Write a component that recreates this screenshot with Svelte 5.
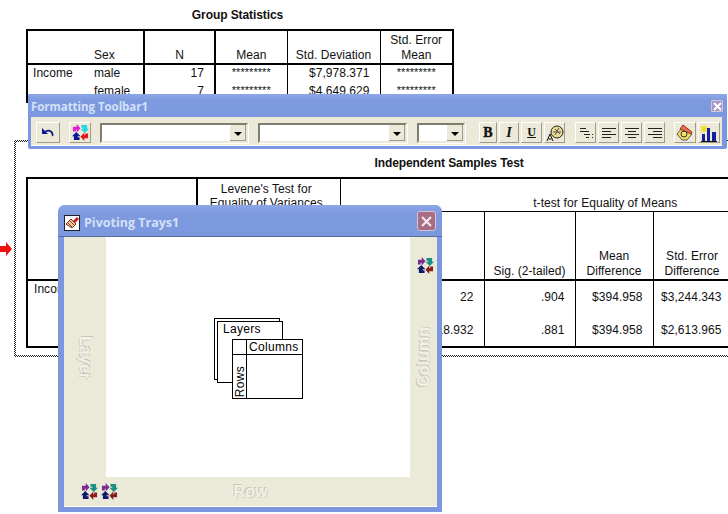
<script>
  const groupRows = [
    { sex: 'male', n: '17', mean: '*********', sd: '$7,978.371', se: '*********' },
    { sex: 'female', n: '7', mean: '*********', sd: '$4,649.629', se: '*********' }
  ]
  const testRows = [
    { label: 'Income', df: '22', sig: '.904', diff: '$394.958', err: '$3,244.343' },
    { label: '', df: '18.932', sig: '.881', diff: '$394.958', err: '$2,613.965' }
  ]
  const bright = ['#e020d0', '#20d8e0', '#0a1a90', '#e01818']
  const dark = ['#7c2c90', '#1c9080', '#10186a', '#8c1c1c']
</script>

{#snippet pivotIcon(c)}
  <svg class="ico" width="17" height="17" viewBox="0 0 18 18">
    <path d="M1 8V3h4V0l4 4.500L5 9V6H4v2z" fill={c[0]} />
    <path d="M10 1h6v4h2l-4.500 4.500L9 5h3V4h-2z" fill={c[1]} />
    <path d="M8 17H2v-4H0l4.500-4.500L9 13H6v1h2z" fill={c[2]} />
    <path d="M17 10v5h-4v3l-4-4.500L13 9v3h1v-2z" fill={c[3]} />
  </svg>
{/snippet}

<div class="page">
  <section class="output first">
    <h2>Group Statistics</h2>
    <table class="group">
      <colgroup><col style="width:67px" /><col style="width:50px" /><col style="width:71px" /><col style="width:72px" /><col style="width:93px" /><col style="width:73px" /></colgroup>
      <thead>
        <tr>
          <th class="plain"></th>
          <th class="left strong">Sex</th>
          <th class="strong">N</th>
          <th>Mean</th>
          <th>Std. Deviation</th>
          <th>Std. Error<br />Mean</th>
        </tr>
      </thead>
      <tbody>
        {#each groupRows as r, i}
          <tr>
            <td class="left plain">{i === 0 ? 'Income' : ''}</td>
            <td class="left strong">{r.sex}</td>
            <td class="strong">{r.n}</td>
            <td class="mid">{r.mean}</td>
            <td>{r.sd}</td>
            <td class="mid">{r.se}</td>
          </tr>
        {/each}
      </tbody>
    </table>
  </section>

  <section class="output second">
    <div class="hatch">
      <div class="sheet">
        <h2>Independent Samples Test</h2>
        <table class="indep">
          <colgroup><col style="width:170px" /><col style="width:72px" /><col style="width:71px" /><col style="width:58px" /><col style="width:86px" /><col style="width:91px" /><col style="width:78px" /><col style="width:78px" /><col style="width:140px" /></colgroup>
          <thead>
            <tr class="top">
              <th class="strong"></th>
              <th colspan="2" class="mid-head">Levene's Test for<br />Equality of Variances</th>
              <th colspan="6" class="span">t-test for Equality of Means</th>
            </tr>
            <tr class="sub">
              <th class="strong"></th>
              <th class="plain"></th>
              <th></th>
              <th class="plain"></th>
              <th class="df">df</th>
              <th>Sig. (2-tailed)</th>
              <th>Mean<br />Difference</th>
              <th>Std. Error<br />Difference</th>
              <th></th>
            </tr>
          </thead>
          <tbody>
            {#each testRows as r}
              <tr>
                <td class="left strong">{r.label}</td>
                <td class="plain"></td>
                <td></td>
                <td class="plain"></td>
                <td>{r.df}</td>
                <td>{r.sig}</td>
                <td>{r.diff}</td>
                <td class="last">{r.err}</td>
                <td></td>
              </tr>
            {/each}
          </tbody>
        </table>
      </div>
    </div>
  </section>

  <svg class="marker" width="13" height="14" viewBox="0 0 13 14"><path d="M0 4h6V0l6 7-6 7v-4H0z" fill="#f01010" /></svg>

  <div class="window toolbar">
    <header class="title small">
      <span>Formatting Toolbar1</span>
      <button class="close tiny" aria-label="Close">
        <svg width="9" height="9" viewBox="0 0 9 9"><path d="M1 1l7 7M8 1L1 8" stroke="#fff" stroke-width="2" /></svg>
      </button>
    </header>
    <div class="tools">
      <button class="tool first-tool" aria-label="Undo">
        <svg width="16" height="14" viewBox="0 0 16 14"><path d="M2 2v6h6L6 6c3-1.500 6 0 6 4.500l1.500-1c.5-5-5-7.500-8.500-4.500z" fill="#0a1a8c" /></svg>
      </button>
      <button class="tool pivot" aria-label="Pivot">{@render pivotIcon(bright)}</button>
      <div class="combo c1"><span class="drop"></span></div>
      <div class="combo c2"><span class="drop"></span></div>
      <div class="combo c3"><span class="drop"></span></div>
      <button class="tool b">B</button>
      <button class="tool i">I</button>
      <button class="tool u">U</button>
      <button class="tool palette" aria-label="Text color">
        <svg width="18" height="18" viewBox="0 0 18 18">
          <circle cx="11" cy="8" r="6" fill="#e8d890" stroke="#222" />
          <path d="M7 8h8M9 5l5 5M13 4l-4 7" stroke="#555" fill="none" />
          <path d="M1 17l3-7 3 7M2.500 15h3" stroke="#111" fill="none" />
        </svg>
      </button>
      <button class="tool indent" aria-label="Indent">
        <svg width="16" height="14" viewBox="0 0 16 14"><path d="M2 2.500h6M2 5.500h9M6 8.500h6M8 11.500h3M14 8.500h1M14 11.500h1" stroke="#222" /></svg>
      </button>
      <button class="tool" aria-label="Align left">
        <svg width="16" height="14" viewBox="0 0 16 14"><path d="M1 2.500h14M1 5.500h9M1 8.500h14M1 11.500h9" stroke="#222" /></svg>
      </button>
      <button class="tool" aria-label="Align center">
        <svg width="16" height="14" viewBox="0 0 16 14"><path d="M1 2.500h14M4 5.500h8M1 8.500h14M4 11.500h8" stroke="#222" /></svg>
      </button>
      <button class="tool" aria-label="Align right">
        <svg width="16" height="14" viewBox="0 0 16 14"><path d="M1 2.500h14M6 5.500h9M1 8.500h14M6 11.500h9" stroke="#222" /></svg>
      </button>
      <button class="tool tag" aria-label="Label">
        <svg width="18" height="18" viewBox="0 0 18 18">
          <path d="M1 10l5-6 10 6-5 6H6z" fill="#f0e060" stroke="#555" />
          <path d="M4 5l3-4 9 7-1 2z" fill="#e07050" stroke="#a03020" />
          <circle cx="8" cy="10" r="3" fill="none" stroke="#333" />
        </svg>
      </button>
      <button class="tool chart" aria-label="Chart">
        <svg width="18" height="18" viewBox="0 0 18 18">
          <path d="M4 0l1 3 3-1-2 3 2 2-3 0-1 3-1-3-3 0 2-2-2-3 3 1z" fill="#f0e020" />
          <path d="M2 10h3v7H2zM7 4h3v13H7zM12 8h4v9h-4z" fill="#1020a0" />
          <path d="M1 17.500h16" stroke="#111" />
        </svg>
      </button>
    </div>
  </div>

  <div class="window trays">
    <header class="title big">
      <svg class="brush" width="16" height="16" viewBox="0 0 16 16">
        <rect x=".5" y=".5" width="15" height="15" fill="#fff" stroke="#222" />
        <path d="M2 9l5-5 5 5-4 4z" fill="#e8c890" stroke="#803020" />
        <path d="M9 6l4-4 2 2-4 4z" fill="#d01818" />
        <path d="M4 8l5 5M6 6l5 5" stroke="#a04030" />
      </svg>
      <span>Pivoting Trays1</span>
      <button class="close" aria-label="Close">
        <svg width="11" height="11" viewBox="0 0 11 11"><path d="M1 1l9 9M10 1L1 10" stroke="#f4e8e8" stroke-width="2.200" /></svg>
      </button>
    </header>
    <div class="client">
      <div class="upper">
        <div class="tray vertical layer"><span>Layer</span></div>
        <div class="canvas">
          <div class="diagram">
            <div class="page-back"></div>
            <div class="page-front">Layers</div>
            <div class="mini">
              <div class="corner"></div>
              <div class="cols">Columns</div>
              <div class="rows"><span>Rows</span></div>
              <div class="body"></div>
            </div>
          </div>
        </div>
        <div class="tray vertical column">
          <div class="tray-icon">{@render pivotIcon(dark)}</div>
          <span>Column</span>
        </div>
      </div>
      <div class="tray row">
        <div class="row-icons">{@render pivotIcon(dark)}{@render pivotIcon(dark)}</div>
        <span>Row</span>
      </div>
    </div>
  </div>
</div>

<style>
  :global(body) {
    margin: 0;
    background: #fff;
  }
  .page {
    position: relative;
    width: 728px;
    height: 514px;
    overflow: hidden;
    font: 12px/14px "Liberation Sans", Arial, sans-serif;
    letter-spacing: 0.05px;
    color: #111;
  }
  h2 {
    margin: 0;
    font-size: 12px;
    line-height: 14px;
    font-weight: bold;
    letter-spacing: -0.08px;
    text-align: center;
  }

  /* output tables */
  .output {
    position: absolute;
  }
  .first {
    left: 26px;
    top: 8px;
    width: 426px;
  }
  .first h2 {
    margin-bottom: 7px;
    padding-left: 3px;
    padding-right: 6px;
  }
  .second {
    left: 14px;
    top: 140px;
  }
  .hatch {
    padding: 2px;
    background: repeating-conic-gradient(#222 0 25%, #fff 0 50%) 0 0 / 2px 2px;
  }
  .sheet {
    background: #fff;
    padding: 14px 20px 7px 10px;
  }
  .sheet h2 {
    margin-bottom: 7px;
  }
  table {
    border-collapse: collapse;
    table-layout: fixed;
    border: 2px solid #000;
  }
  .group {
    width: 426px;
  }
  .indep {
    width: 844px;
  }
  th {
    font-weight: normal;
    line-height: 15px;
    vertical-align: bottom;
    padding: 0 1px 1px;
    border-left: 1px solid #000;
    border-bottom: 2px solid #000;
    text-align: center;
  }
  td {
    text-align: right;
    padding: 0 10px 0 0;
    border-left: 1px solid #000;
    white-space: nowrap;
  }
  .group th {
    height: 32px;
    padding-bottom: 0;
  }
  .group td {
    height: 17px;
    padding-top: 1px;
    vertical-align: top;
  }
  th.left,
  td.left {
    text-align: left;
    padding-left: 0;
    padding-right: 0;
  }
  td.left.plain {
    padding-left: 5px;
  }
  th.plain,
  td.plain,
  .group .left {
    border-left: 0;
  }
  th.strong,
  td.strong {
    border-right: 2px solid #000;
  }
  .group th.left,
  .group td.left:not(.plain) {
    border-left: 0;
  }
  td.mid {
    text-align: center;
    padding: 0;
    font-size: 11px;
  }
  .indep .top th {
    height: 29px;
    padding-bottom: 0;
    border-bottom: 1px solid #000;
  }
  .indep .top th.strong {
    border-bottom: 0;
  }
  .indep .top .mid-head {
    line-height: 14px;
    border-left: 0;
    border-right: 1px solid #000;
    vertical-align: top;
    padding: 3px 5px 0 0;
  }
  .indep .top .span {
    border-left: 0;
  }
  .indep .sub th {
    height: 67px;
    padding-bottom: 0;
  }
  .indep .df {
    text-align: left;
    border-left: 0;
  }
  .indep td {
    height: 33.5px;
    box-sizing: border-box;
  }
  .indep td.last {
    padding-right: 9px;
  }
  .indep td.left {
    vertical-align: top;
    padding: 1px 0 0 6px;
  }

  .marker {
    position: absolute;
    left: 0;
    top: 242px;
  }

  /* floating windows */
  .window {
    position: absolute;
    box-sizing: border-box;
    background: #7b97e0;
    display: flex;
    flex-direction: column;
  }
  .toolbar {
    left: 28px;
    top: 94px;
    width: 699px;
    height: 55px;
    padding: 0 5px 3px 3px;
    border-radius: 2px;
  }
  .trays {
    left: 58px;
    top: 205px;
    width: 384px;
    height: 307px;
    padding: 0 5px 5px 6px;
    border-radius: 7px 7px 0 0;
  }
  .title {
    display: flex;
    align-items: center;
    font-family: "Open Sans", sans-serif;
    font-weight: bold;
    color: #d4e0f8;
    letter-spacing: 0;
    background: linear-gradient(#8ca6e6, #7d9adf 30%, #7b97dd);
    margin: 0 -5px 0 -3px;
    padding: 0 5px 0 3px;
  }
  .title span {
    flex: 1;
  }
  .small {
    height: 23px;
    font-size: 11.5px;
    letter-spacing: -0.05px;
    box-sizing: border-box;
    padding-top: 3px;
  }
  .big {
    height: 32px;
    font-size: 12.5px;
    margin: 0 -5px 0 -6px;
    padding: 4px 6px 0 6px;
    border-radius: 7px 7px 0 0;
    gap: 4px;
    border-bottom: 1px solid #5c6c98;
    box-sizing: border-box;
  }
  .close {
    display: flex;
    align-items: center;
    justify-content: center;
    box-sizing: border-box;
    width: 19px;
    height: 20px;
    padding: 0;
    background: #a86c84;
    border: 1px solid #d8c4d4;
    border-radius: 3px;
    margin-top: -3px;
  }
  .tiny {
    width: 12px;
    height: 12px;
    background: #a39acb;
    border-radius: 1px;
    margin: -2px -1px 0 0;
  }
  .tools {
    flex: 1;
    background: #ece9d8;
    display: flex;
    align-items: center;
    gap: 2px;
    padding: 3px 0 0 5px;
    border-bottom: 1px solid #fff;
  }
  .tool {
    box-sizing: border-box;
    width: 21px;
    height: 21px;
    padding: 0;
    display: flex;
    align-items: center;
    justify-content: center;
    background: #ece9d8;
    border: 1px solid;
    border-color: #fff #9d9b8c #9d9b8c #fff;
  }
  .first-tool {
    width: 24px;
  }
  .pivot {
    margin-left: 7px;
    width: 22px;
  }
  .b,
  .i,
  .u {
    font: bold 14px "Liberation Serif", serif;
    color: #111;
  }
  .b {
    width: 18px;
    margin-left: 12px;
    -webkit-text-stroke: 0.4px #111;
  }
  .i {
    width: 20px;
    font-style: italic;
  }
  .u {
    font-size: 12px;
    text-decoration: underline;
  }
  .indent {
    margin-left: 8px;
  }
  .tag {
    width: 22px;
    margin-left: 7px;
  }
  .chart {
    width: 22px;
  }
  .combo {
    box-sizing: border-box;
    height: 20px;
    background: #fff;
    border: 2px solid;
    border-color: #7f7d70 #ece9d8 #ece9d8 #7f7d70;
    box-shadow: 1px 1px 0 #fff;
    display: flex;
    justify-content: flex-end;
    margin-left: 8px;
  }
  .c1 {
    width: 148px;
    margin-left: 7px;
  }
  .c2 {
    width: 149px;
  }
  .c3 {
    width: 48px;
  }
  .drop {
    position: relative;
    width: 16px;
    background: #ece9d8;
    box-shadow: inset -1px -1px 0 #9d9b8c;
  }
  .drop::after {
    content: '';
    position: absolute;
    left: 4px;
    top: 7px;
    border: 4px solid transparent;
    border-top: 4px solid #000;
    border-bottom: 0;
  }
  .client {
    flex: 1;
    display: flex;
    flex-direction: column;
    background: #fff;
  }
  .upper {
    flex: 1;
    display: flex;
  }
  .tray {
    background: #ebe9d8;
    color: #f2f1e6;
    font: bold 16px "Liberation Sans", sans-serif;
    text-shadow: 1px 1px 0 #d4d3c4, -1px -1px 0 #c8c7b8;
  }
  .vertical {
    position: relative;
    display: flex;
    align-items: center;
    justify-content: center;
  }
  .vertical span {
    writing-mode: vertical-rl;
  }
  .layer {
    width: 42px;
    box-sizing: border-box;
  }
  .column {
    width: 27px;
    box-sizing: border-box;
  }
  .column span {
    transform: rotate(180deg);
  }
  .tray-icon {
    position: absolute;
    top: 20px;
    left: 7px;
    height: 17px;
  }
  .canvas {
    flex: 1;
    position: relative;
  }
  .diagram {
    position: absolute;
    left: 108px;
    top: 81px;
    width: 90px;
    height: 81px;
    color: #000;
    letter-spacing: 0.3px;
  }
  .page-back,
  .page-front,
  .mini {
    position: absolute;
    box-sizing: border-box;
    background: #fff;
    border: 1px solid #000;
  }
  .page-back {
    left: 0;
    top: 0;
    width: 66px;
    height: 62px;
  }
  .page-front {
    left: 3px;
    top: 3px;
    width: 66px;
    height: 62px;
    padding-left: 5px;
  }
  .mini {
    left: 18px;
    top: 21px;
    width: 71px;
    height: 60px;
    display: grid;
    grid-template-columns: 14px 1fr;
    grid-template-rows: 15px 1fr;
  }
  .corner {
    border-right: 1px solid #000;
    border-bottom: 1px solid #000;
  }
  .cols {
    border-bottom: 1px solid #000;
    padding-left: 2px;
  }
  .rows {
    border-right: 1px solid #000;
    display: flex;
    align-items: flex-end;
    justify-content: center;
    padding-bottom: 1px;
  }
  .rows span {
    writing-mode: vertical-rl;
    transform: rotate(180deg);
  }
  .row {
    height: 29px;
    display: flex;
    align-items: center;
    justify-content: center;
    position: relative;
    border-bottom: 1px solid #fff;
  }
  .row-icons {
    position: absolute;
    left: 17px;
    top: 6px;
    display: flex;
    gap: 3px;
  }
  .ico {
    display: block;
  }
</style>
